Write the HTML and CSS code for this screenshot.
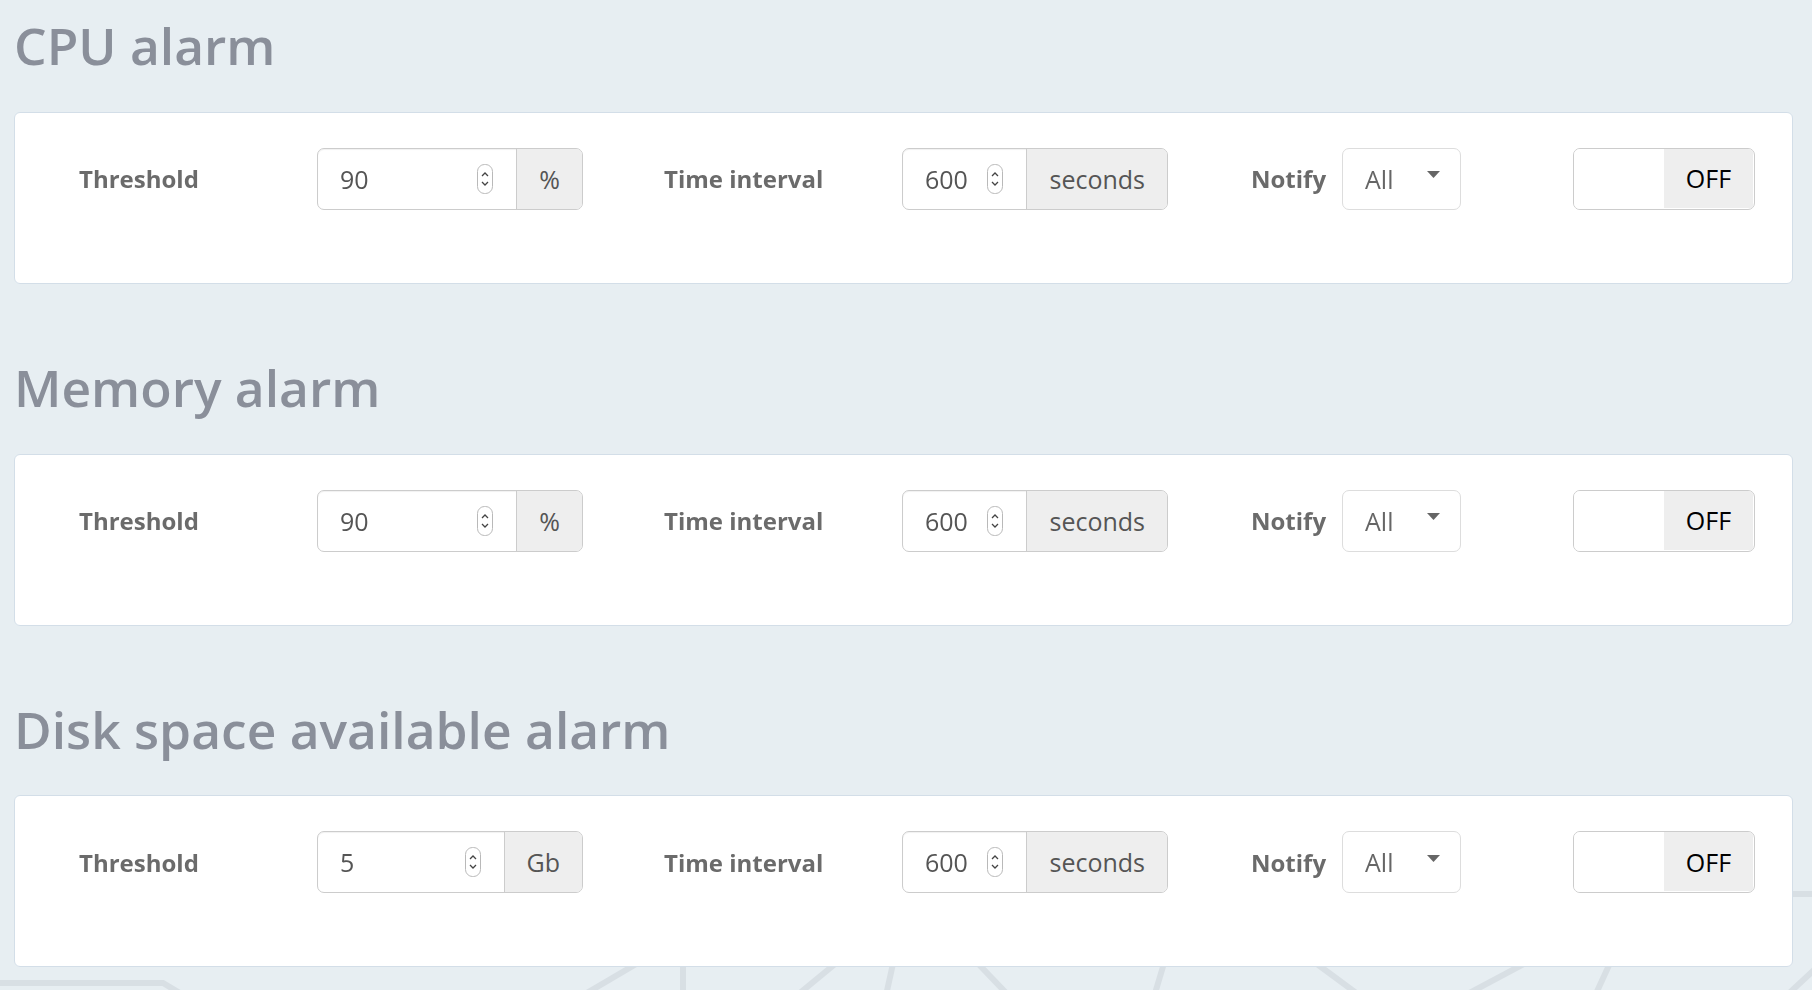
FILE: index.html
```html
<!DOCTYPE html>
<html>

<head>
    <title>Alarms</title>
    <meta name="viewport" content="width=device-width, initial-scale=1">
    <link rel="stylesheet" href="styles.css">
</head>

<body>
    <svg class="bg-lines" width="1812" height="990" viewBox="0 0 1812 990">
        <g fill="none" stroke="#d8dfe4" stroke-width="6">
            <polyline points="-10,983 163,983 200,1005" />
            <line x1="660" y1="950" x2="580" y2="997" />
            <line x1="683" y1="950" x2="683" y2="1000" />
            <line x1="852" y1="950" x2="795" y2="997" />
            <line x1="896" y1="950" x2="885" y2="1000" />
            <line x1="965" y1="950" x2="1010" y2="997" />
            <line x1="1168" y1="950" x2="1153" y2="1000" />
            <line x1="1298" y1="950" x2="1363" y2="998" />
            <line x1="1550" y1="950" x2="1460" y2="998" />
            <line x1="1616" y1="950" x2="1594" y2="998" />
            <line x1="1830" y1="955" x2="1785" y2="997" />
            <line x1="1780" y1="894" x2="1820" y2="894" />
        </g>
    </svg>

    <div class="page">
        <section class="alarm">
            <h2 class="alarm-title">CPU alarm</h2>
            <div class="alarm-card">
                <div class="field">
                    <label class="field-label">Threshold</label>
                    <div class="input-group">
                        <div class="input-box">
                            <input type="text" value="90">
                            <span class="spinner"><svg width="16" height="30" viewBox="0 0 16 30"><rect x="0.5" y="0.5" width="15" height="29" rx="7" fill="#fff" stroke="#b9b9b9"/><path d="M5 12 L8 9 L11 12 M5 18 L8 21 L11 18" fill="none" stroke="#444" stroke-width="1.3"/></svg></span>
                        </div>
                        <span class="addon">%</span>
                    </div>
                </div>
                <div class="field">
                    <label class="field-label">Time interval</label>
                    <div class="input-group">
                        <div class="input-box">
                            <input type="text" value="600">
                            <span class="spinner"><svg width="16" height="30" viewBox="0 0 16 30"><rect x="0.5" y="0.5" width="15" height="29" rx="7" fill="#fff" stroke="#b9b9b9"/><path d="M5 12 L8 9 L11 12 M5 18 L8 21 L11 18" fill="none" stroke="#444" stroke-width="1.3"/></svg></span>
                        </div>
                        <span class="addon">seconds</span>
                    </div>
                </div>
                <div class="field field-notify">
                    <label class="notify-label">Notify</label>
                    <div class="select-box">
                        <span>All</span>
                        <svg class="caret" width="13" height="7" viewBox="0 0 13 7"><path d="M0 0 H13 L6.5 7 Z" fill="#666"/></svg>
                    </div>
                </div>
                <div class="switch">
                    <span class="switch-handle"></span>
                    <span class="switch-off">OFF</span>
                </div>
            </div>
        </section>

        <section class="alarm">
            <h2 class="alarm-title">Memory alarm</h2>
            <div class="alarm-card">
                <div class="field">
                    <label class="field-label">Threshold</label>
                    <div class="input-group">
                        <div class="input-box">
                            <input type="text" value="90">
                            <span class="spinner"><svg width="16" height="30" viewBox="0 0 16 30"><rect x="0.5" y="0.5" width="15" height="29" rx="7" fill="#fff" stroke="#b9b9b9"/><path d="M5 12 L8 9 L11 12 M5 18 L8 21 L11 18" fill="none" stroke="#444" stroke-width="1.3"/></svg></span>
                        </div>
                        <span class="addon">%</span>
                    </div>
                </div>
                <div class="field">
                    <label class="field-label">Time interval</label>
                    <div class="input-group">
                        <div class="input-box">
                            <input type="text" value="600">
                            <span class="spinner"><svg width="16" height="30" viewBox="0 0 16 30"><rect x="0.5" y="0.5" width="15" height="29" rx="7" fill="#fff" stroke="#b9b9b9"/><path d="M5 12 L8 9 L11 12 M5 18 L8 21 L11 18" fill="none" stroke="#444" stroke-width="1.3"/></svg></span>
                        </div>
                        <span class="addon">seconds</span>
                    </div>
                </div>
                <div class="field field-notify">
                    <label class="notify-label">Notify</label>
                    <div class="select-box">
                        <span>All</span>
                        <svg class="caret" width="13" height="7" viewBox="0 0 13 7"><path d="M0 0 H13 L6.5 7 Z" fill="#666"/></svg>
                    </div>
                </div>
                <div class="switch">
                    <span class="switch-handle"></span>
                    <span class="switch-off">OFF</span>
                </div>
            </div>
        </section>

        <section class="alarm">
            <h2 class="alarm-title">Disk space available alarm</h2>
            <div class="alarm-card">
                <div class="field">
                    <label class="field-label">Threshold</label>
                    <div class="input-group">
                        <div class="input-box">
                            <input type="text" value="5">
                            <span class="spinner"><svg width="16" height="30" viewBox="0 0 16 30"><rect x="0.5" y="0.5" width="15" height="29" rx="7" fill="#fff" stroke="#b9b9b9"/><path d="M5 12 L8 9 L11 12 M5 18 L8 21 L11 18" fill="none" stroke="#444" stroke-width="1.3"/></svg></span>
                        </div>
                        <span class="addon">Gb</span>
                    </div>
                </div>
                <div class="field">
                    <label class="field-label">Time interval</label>
                    <div class="input-group">
                        <div class="input-box">
                            <input type="text" value="600">
                            <span class="spinner"><svg width="16" height="30" viewBox="0 0 16 30"><rect x="0.5" y="0.5" width="15" height="29" rx="7" fill="#fff" stroke="#b9b9b9"/><path d="M5 12 L8 9 L11 12 M5 18 L8 21 L11 18" fill="none" stroke="#444" stroke-width="1.3"/></svg></span>
                        </div>
                        <span class="addon">seconds</span>
                    </div>
                </div>
                <div class="field field-notify">
                    <label class="notify-label">Notify</label>
                    <div class="select-box">
                        <span>All</span>
                        <svg class="caret" width="13" height="7" viewBox="0 0 13 7"><path d="M0 0 H13 L6.5 7 Z" fill="#666"/></svg>
                    </div>
                </div>
                <div class="switch">
                    <span class="switch-handle"></span>
                    <span class="switch-off">OFF</span>
                </div>
            </div>
        </section>
    </div>
</body>

</html>
```

FILE: styles.css
```css
html {
    background-color: #e7eef2;
}

body {
    font-family: "Open Sans", Arial, sans-serif;
    margin: 0;
    padding: 0;
    overflow: hidden;
}

.bg-lines {
    position: fixed;
    left: 0;
    top: 0;
    z-index: 0;
}

.page {
    position: relative;
    z-index: 1;
    padding: 0 19px 0 14px;
}

.alarm {
    padding-top: 15px;
}

.alarm + .alarm {
    margin-top: 58px;
}

.alarm-title {
    margin: 0 0 35px;
    font-size: 51.5px;
    font-weight: 600;
    line-height: 1.2;
    color: #8a8f9a;
}

.alarm-card {
    display: flex;
    align-items: center;
    padding: 35px 37px 73px 64px;
    background-color: #fff;
    border: 1px solid #d3dee8;
    border-radius: 6px;
}

.field {
    display: flex;
    align-items: center;
}

.field + .field {
    margin-left: 81px;
}

.field.field-notify {
    margin-left: 83px;
}

.field-label,
.notify-label {
    font-size: 24px;
    font-weight: 700;
    color: #6b6b6b;
}

.field-label {
    width: 238px;
}

.notify-label {
    margin-right: 16px;
}

.input-group {
    display: flex;
    box-sizing: border-box;
    width: 266px;
    height: 62px;
    border: 1px solid #ccc;
    border-radius: 7px;
    overflow: hidden;
    box-shadow: inset 0 1px 1px rgba(0, 0, 0, 0.06);
}

.input-box {
    display: flex;
    align-items: center;
    flex: 1;
    min-width: 0;
    padding-right: 23px;
}

.input-box input {
    flex: 1;
    min-width: 0;
    padding: 0 0 0 22px;
    border: none;
    outline: none;
    background: transparent;
    font-family: "Open Sans", Arial, sans-serif;
    font-size: 25px;
    color: #555;
}

.spinner {
    display: flex;
}

.addon {
    display: flex;
    align-items: center;
    padding: 0 22px;
    background-color: #eee;
    border-left: 1px solid #ccc;
    font-size: 25px;
    color: #555;
}

.select-box {
    display: flex;
    align-items: center;
    justify-content: space-between;
    box-sizing: border-box;
    width: 119px;
    height: 62px;
    padding: 0 20px 0 22px;
    border: 1px solid #ddd;
    border-radius: 7px;
    font-size: 25px;
    color: #666;
}

.caret {
    margin-top: -8px;
}

.switch {
    display: flex;
    margin-left: auto;
    width: 182px;
    height: 62px;
    box-sizing: border-box;
    border: 1px solid #ccc;
    border-radius: 7px;
    overflow: hidden;
}

.switch-handle {
    width: 90px;
    background-color: #fff;
}

.switch-off {
    flex: 1;
    display: flex;
    align-items: center;
    justify-content: center;
    margin: 0 1px 1px 0;
    background-color: #eee;
    font-size: 25px;
    color: #000;
}
```
